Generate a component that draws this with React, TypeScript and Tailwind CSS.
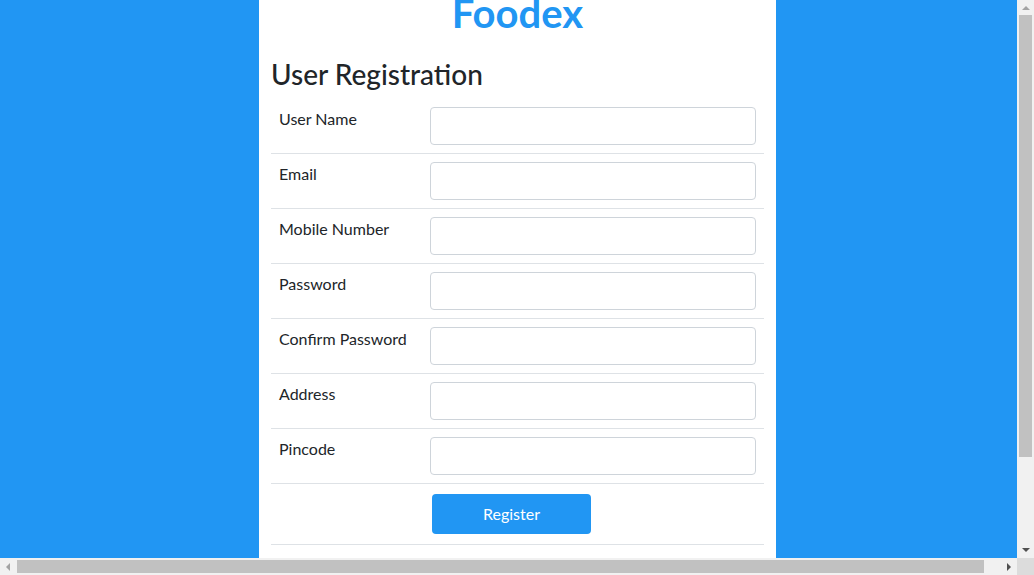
const fields = ['User Name', 'Email', 'Mobile Number', 'Password', 'Confirm Password', 'Address', 'Pincode'];

function ScrollArrow({ dir, dim }: { dir: 'up' | 'down' | 'left' | 'right'; dim?: boolean }) {
  const points = {
    up: '4,1 8,5 0,5',
    down: '0,1 8,1 4,5',
    left: '5,0 5,8 1,4',
    right: '1,0 1,8 5,4',
  }[dir];
  const vertical = dir === 'up' || dir === 'down';
  return (
    <svg width={vertical ? 8 : 6} height={vertical ? 6 : 8} viewBox={vertical ? '0 0 8 6' : '0 0 6 8'}>
      <polygon points={points} fill={dim ? '#a3a3a3' : '#505050'} />
    </svg>
  );
}

export default function App() {
  return (
    <div className="flex h-[575px] w-[1034px] flex-col overflow-hidden font-['Lato',sans-serif] text-[#212529]">
      <div className="flex h-[558px]">
        <main className="w-[1017px] overflow-hidden bg-[#2196f3]">
          <div className="ml-[259px] flex h-full w-[517px] flex-col bg-white px-3">
            <h1 className="-mt-[11px] text-center text-[40px] font-bold leading-[48px] text-[#2196f3]">Foodex</h1>
            <h3 className="mt-[20px] mb-2 text-[28px] font-medium leading-[34px]">User Registration</h3>
            <div>
              {fields.map((label) => (
                <div key={label} className="flex border-b border-[#dee2e6]">
                  <div className="w-[151px] whitespace-nowrap px-2 pt-[8px] text-base leading-6">{label}</div>
                  <div className="flex-1 px-2 py-2">
                    <input
                      type={label.includes('Password') ? 'password' : 'text'}
                      className="block h-[38px] w-full rounded border border-[#ced4da] bg-white px-3 text-base outline-none"
                    />
                  </div>
                </div>
              ))}
              <div className="flex border-b border-[#dee2e6]">
                <div className="w-[151px]" />
                <div className="flex-1 px-2 py-[10px]">
                  <button className="ml-[2px] h-10 w-[159px] rounded bg-[#2196f3] text-base text-white">Register</button>
                </div>
              </div>
            </div>
          </div>
        </main>
        <div className="flex w-[17px] flex-col bg-[#f1f1f1]">
          <div className="flex h-[15px] items-center justify-center"><ScrollArrow dir="up" dim /></div>
          <div className="mx-[2px] h-[442px] bg-[#c1c1c1]" />
          <div className="flex-1" />
          <div className="flex h-[17px] items-center justify-center"><ScrollArrow dir="down" /></div>
        </div>
      </div>
      <div className="flex h-[17px]">
        <div className="flex w-[1017px] items-center bg-[#f1f1f1]">
          <div className="flex w-[15px] items-center justify-center"><ScrollArrow dir="left" dim /></div>
          <div className="ml-[2px] h-[13px] w-[967px] bg-[#c1c1c1]" />
          <div className="flex-1" />
          <div className="flex w-[17px] items-center justify-center"><ScrollArrow dir="right" /></div>
        </div>
        <div className="w-[17px] bg-[#dcdcdc]" />
      </div>
    </div>
  );
}
